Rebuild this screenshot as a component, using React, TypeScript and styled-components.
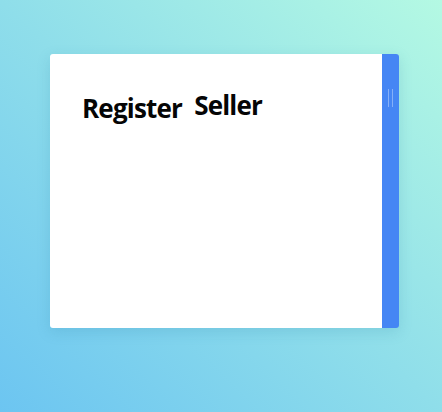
import React from "react";
import styled, { createGlobalStyle } from "styled-components";

const Global = createGlobalStyle`
  html, body { margin: 0; padding: 0; }
  body { font-family: "Open Sans", "Liberation Sans", sans-serif; }
`;

const Page = styled.div`
  width: 442px;
  height: 412px;
  background: linear-gradient(to top right, #6cc5f1 0%, #8fdeea 50%, #b4f9e3 100%);
  padding: 54px 0 0 50px;
  box-sizing: border-box;
`;

const Card = styled.div`
  width: 349px;
  height: 274px;
  display: flex;
  border-radius: 3px;
  overflow: hidden;
  box-shadow: 0 4px 14px rgba(40, 120, 160, 0.18);
`;

const Body = styled.div`
  flex: 1;
  background: #ffffff;
  padding: 38px 0 0 32px;
`;

const Title = styled.h1`
  margin: 0;
  display: flex;
  align-items: flex-start;
  gap: 12px;
  font-family: "Open Sans", "Liberation Sans", sans-serif;
  font-weight: 700;
  font-size: 26px;
  line-height: 32px;
  color: #050505;
  letter-spacing: -0.8px;
`;

const Word = styled.span<{ $lift?: number }>`
  display: block;
  transform: translateY(${(p) => -(p.$lift ?? 0)}px);
`;

const Strip = styled.div`
  width: 17px;
  background: #4586f4;
  display: flex;
  justify-content: center;
  padding-top: 35px;
  gap: 3px;
`;

const Grip = styled.span`
  width: 1px;
  height: 18px;
  background: rgba(255, 255, 255, 0.35);
`;

export default function App() {
  return (
    <>
      <Global />
      <Page>
        <Card>
          <Body>
            <Title>
              <Word>Register</Word>
              <Word $lift={3}>Seller</Word>
            </Title>
          </Body>
          <Strip>
            <Grip />
            <Grip />
          </Strip>
        </Card>
      </Page>
    </>
  );
}
